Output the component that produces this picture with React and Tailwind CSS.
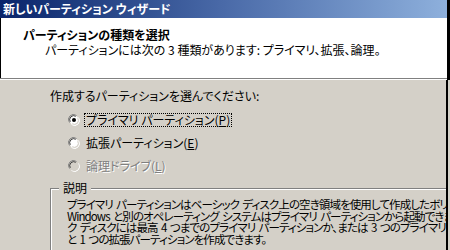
import React from "react";

function Radio({ checked = false, disabled = false }) {
  return (
    <svg width="12" height="12" viewBox="0 0 12 12" className="shrink-0 block">
      <path d="M1.5 8.5 A5 5 0 0 1 8.5 1.5" fill="none" stroke="#808080" strokeWidth="1" />
      <path d="M3.5 10.5 A5 5 0 0 0 10.5 3.5" fill="none" stroke="#ffffff" strokeWidth="1" />
      <circle cx="6" cy="6" r="4.5" fill={disabled ? "#d4d0c8" : "#ffffff"} />
      <path d="M2.3 7.8 A4 4 0 0 1 7.8 2.3" fill="none" stroke="#404040" strokeWidth="1" />
      <path d="M4.2 9.7 A4 4 0 0 0 9.7 4.2" fill="none" stroke="#d4d0c8" strokeWidth="1" />
      {checked && <circle cx="6" cy="6" r="2" fill="#000000" />}
    </svg>
  );
}

export default function App() {
  const jp = "font-['Noto_Sans_CJK_JP','Noto_Sans',sans-serif] [font-feature-settings:'palt']";
  return (
    <div className={`w-[450px] h-[250px] overflow-hidden bg-[#d4d0c8] text-[12px] leading-[12px] text-black ${jp}`}>
      <div className="w-[450px] border-r-[3px] border-black">
        {/* Title bar */}
        <div className="h-[18px] bg-gradient-to-r from-[#0a246a] via-[#4a6aa8] to-[#8eb0dc] text-white font-bold text-[12px] leading-[17px] pl-[3px] whitespace-nowrap">
          新しいパーティション ウィザード
        </div>
        {/* Header */}
        <div className="h-[60px] bg-white border-l border-black pt-[11px]">
          <div className="pl-[22px] font-bold whitespace-nowrap">パーティションの種類を選択</div>
          <div className="pl-[44px] mt-[3px] whitespace-nowrap">
            パーティションには次の 3 種類があります: プライマリ、拡張、論理。
          </div>
        </div>
        <div className="h-px bg-[#808080]" />
        <div className="h-px bg-white" />
      </div>
      {/* Body */}
      <div className="w-[448px] h-[170px] border-r-2 border-black overflow-hidden pt-[10px]">
        <div className="pl-[50px] whitespace-nowrap">作成するパーティションを選んでください:</div>
        <div className="pl-[68px] mt-[11px] flex flex-col gap-[9px]">
          <div className="flex items-center h-[14px]">
            <Radio checked />
            <span className="ml-[4px] border border-dotted border-black px-[1px] h-[14px] leading-[12px] whitespace-nowrap">
              プライマリ パーティション(<span className="underline">P</span>)
            </span>
          </div>
          <div className="flex items-center h-[14px]">
            <Radio />
            <span className="ml-[6px] whitespace-nowrap">
              拡張パーティション(<span className="underline">E</span>)
            </span>
          </div>
          <div className="flex items-center h-[14px]">
            <Radio disabled />
            <span className="ml-[6px] whitespace-nowrap text-[#808080] [text-shadow:1px_1px_0_#ffffff]">
              論理ドライブ(<span className="underline">L</span>)
            </span>
          </div>
        </div>
        {/* Group box */}
        <div className="ml-[50px] mt-[15px] relative border-t border-l border-[#808080] shadow-[inset_1px_1px_0_#ffffff] h-[80px]">
          <div className="absolute left-[8px] -top-[7px] bg-[#d4d0c8] px-[4px] leading-[12px]">説明</div>
          <div className="pl-[16px] pt-[10px] text-[11.5px] leading-[11.7px] whitespace-pre tracking-[-0.9px]">
            <div>プライマリ  パーティションはベーシック  ディスク上の空き領域を使用して作成したボリュームです。</div>
            <div>Windows  と別のオペレーティング  システムはプライマリ  パーティションから起動できます。ベーシッ</div>
            <div>ク  ディスクには最高  4  つまでのプライマリ  パーティションか、または  3  つのプライマリ  パーティション</div>
            <div>と  1  つの拡張パーティションを作成できます。</div>
          </div>
        </div>
      </div>
    </div>
  );
}
